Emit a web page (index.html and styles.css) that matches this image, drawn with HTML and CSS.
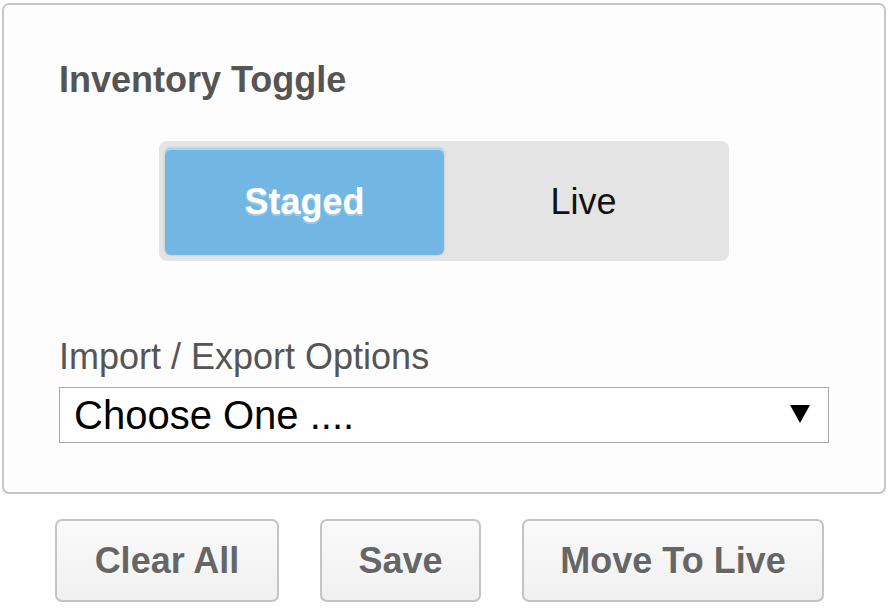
FILE: index.html
```html
<!DOCTYPE html>
<html>
<head>
<meta charset="utf-8">
<link rel="stylesheet" href="styles.css">
</head>
<body>
<div class="panel">
  <div class="title">Inventory Toggle</div>
  <div class="toggle">
    <div class="opt active">Staged</div>
    <div class="opt">Live</div>
  </div>
  <div class="label">Import / Export Options</div>
  <div class="select">
    <span class="select-text">Choose One ....</span>
    <svg class="arrow" width="20" height="18" viewBox="0 0 20 18"><polygon points="0,0 20,0 10,18" fill="#000"/></svg>
  </div>
</div>
<div class="actions">
  <div class="btn btn-clear">Clear All</div>
  <div class="btn btn-save">Save</div>
  <div class="btn btn-move">Move To Live</div>
</div>
</body>
</html>
```
FILE: styles.css
```css
html, body {
  margin: 0;
  padding: 0;
  background: #ffffff;
}
body {
  font-family: "Liberation Sans", Arial, sans-serif;
  font-size: 36px;
  line-height: 40px;
}
.panel {
  box-sizing: border-box;
  margin: 3px 0 0 2px;
  width: 884px;
  height: 491px;
  border: 2px solid #c6c6c6;
  border-radius: 7px;
  background: #fdfdfd;
  padding: 55px 0 0 55px;
}
.title {
  font-weight: bold;
  color: #555555;
  height: 40px;
}
.toggle {
  box-sizing: border-box;
  margin: 41px 0 0 100px;
  width: 570px;
  height: 120px;
  background: #e4e4e4;
  border-radius: 8px;
  padding: 7px 6px 6px 6px;
  display: flex;
}
.opt {
  flex: 1 1 0;
  display: flex;
  align-items: center;
  justify-content: center;
  color: #111111;
}
.opt.active {
  background: #72b7e4;
  border-radius: 6px;
  color: #ffffff;
  font-weight: bold;
  box-shadow: 0 0 3px rgba(0, 0, 0, 0.18), inset 0 2px 0 #a9d5f1;
  text-shadow: 0 2px 1px #9fcdec;
}
.label {
  margin-top: 76px;
  color: #555555;
  height: 40px;
}
.select {
  box-sizing: border-box;
  margin-top: 10px;
  width: 770px;
  height: 56px;
  border: 1px solid #aaaaaa;
  background: #ffffff;
  display: flex;
  align-items: center;
  justify-content: space-between;
  padding: 0 18px 0 14px;
  color: #000000;
  font-size: 40px;
}
.select-text {
  line-height: 44px;
}
.arrow {
  display: block;
  margin-top: -2px;
}
.actions {
  display: flex;
  gap: 41px;
  margin-top: 25px;
  padding-left: 55px;
}
.btn {
  box-sizing: border-box;
  height: 83px;
  border: 2px solid #c4c4c4;
  border-radius: 7px;
  background: linear-gradient(#fafafa, #f0f0f0);
  color: #666666;
  font-weight: bold;
  text-shadow: 0 2px 0 #ffffff;
  display: flex;
  align-items: center;
  justify-content: center;
}
.btn-clear { width: 224px; }
.btn-save { width: 161px; }
.btn-move { width: 302px; }
```
